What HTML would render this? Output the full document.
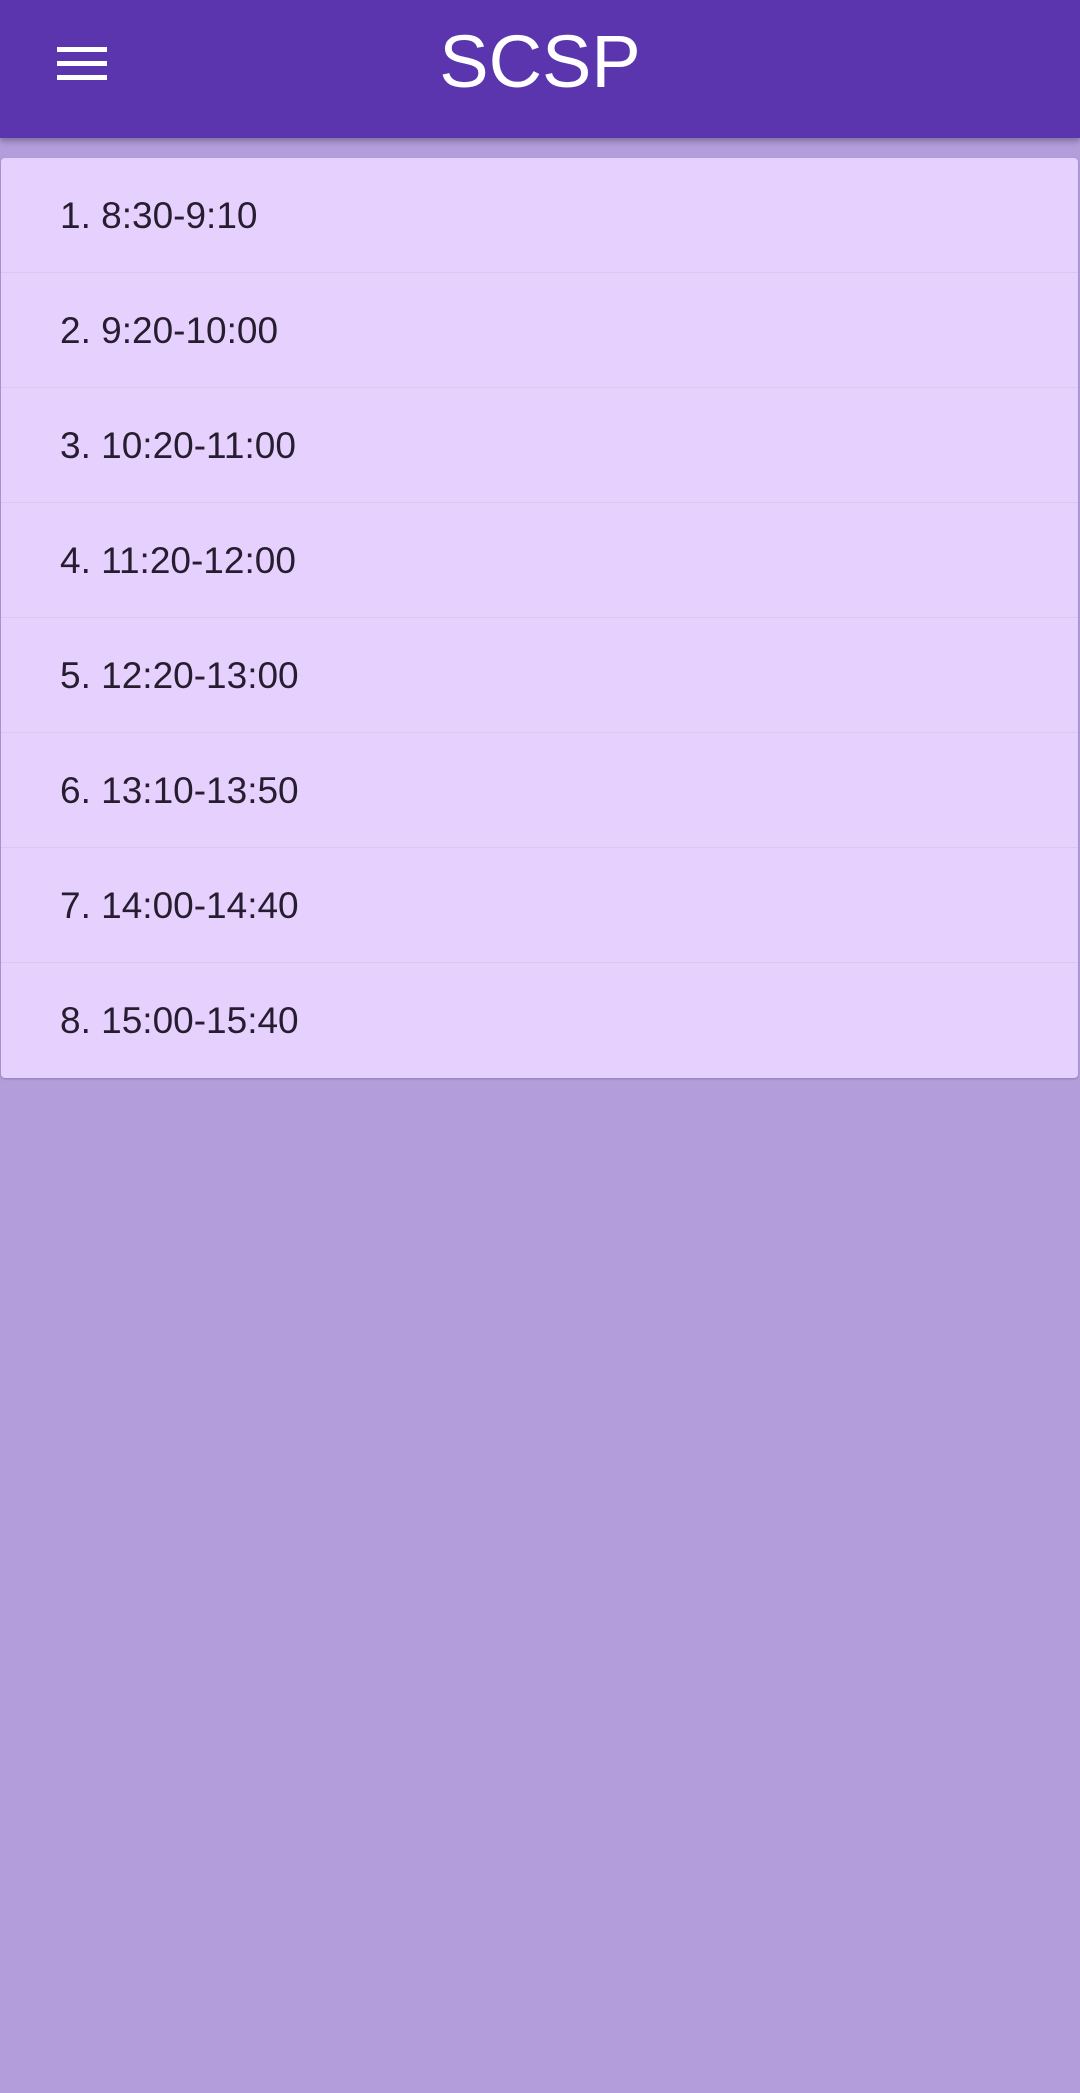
<!DOCTYPE html>
<html><head><meta charset="utf-8"><style>
html,body{margin:0;padding:0;}
body{width:1080px;height:2093px;background:#b39ddb;font-family:"Liberation Sans",sans-serif;position:relative;overflow:hidden;}
.hdr{position:absolute;left:0;top:0;width:1080px;height:138px;background:#5b35ad;box-shadow:0 3px 6px rgba(0,0,0,0.3);z-index:2;}
.ham{position:absolute;left:57px;width:50px;height:5px;background:#fff;}
.title{position:absolute;left:0;width:1080px;top:12px;text-align:center;color:#fff;font-size:74px;line-height:100px;}
.card{position:absolute;left:1px;top:158px;width:1077px;height:920px;background:#e6d0fd;border-radius:4px;box-shadow:0 1px 2px rgba(0,0,0,0.2);}
.row{height:114px;border-bottom:1px solid #d8c8ea;box-sizing:content-box;position:relative;}
.row:last-child{border-bottom:none;}
.row span{position:absolute;left:59px;top:36px;font-size:37px;line-height:44px;color:#271d30;}
</style></head><body>
<div class="hdr">
<div class="ham" style="top:47px"></div>
<div class="ham" style="top:61px"></div>
<div class="ham" style="top:75px"></div>
<div class="title">SCSP</div>
</div>
<div class="card">
<div class="row"><span>1. 8:30-9:10</span></div>
<div class="row"><span>2. 9:20-10:00</span></div>
<div class="row"><span>3. 10:20-11:00</span></div>
<div class="row"><span>4. 11:20-12:00</span></div>
<div class="row"><span>5. 12:20-13:00</span></div>
<div class="row"><span>6. 13:10-13:50</span></div>
<div class="row"><span>7. 14:00-14:40</span></div>
<div class="row"><span>8. 15:00-15:40</span></div>
</div>
</body></html>
